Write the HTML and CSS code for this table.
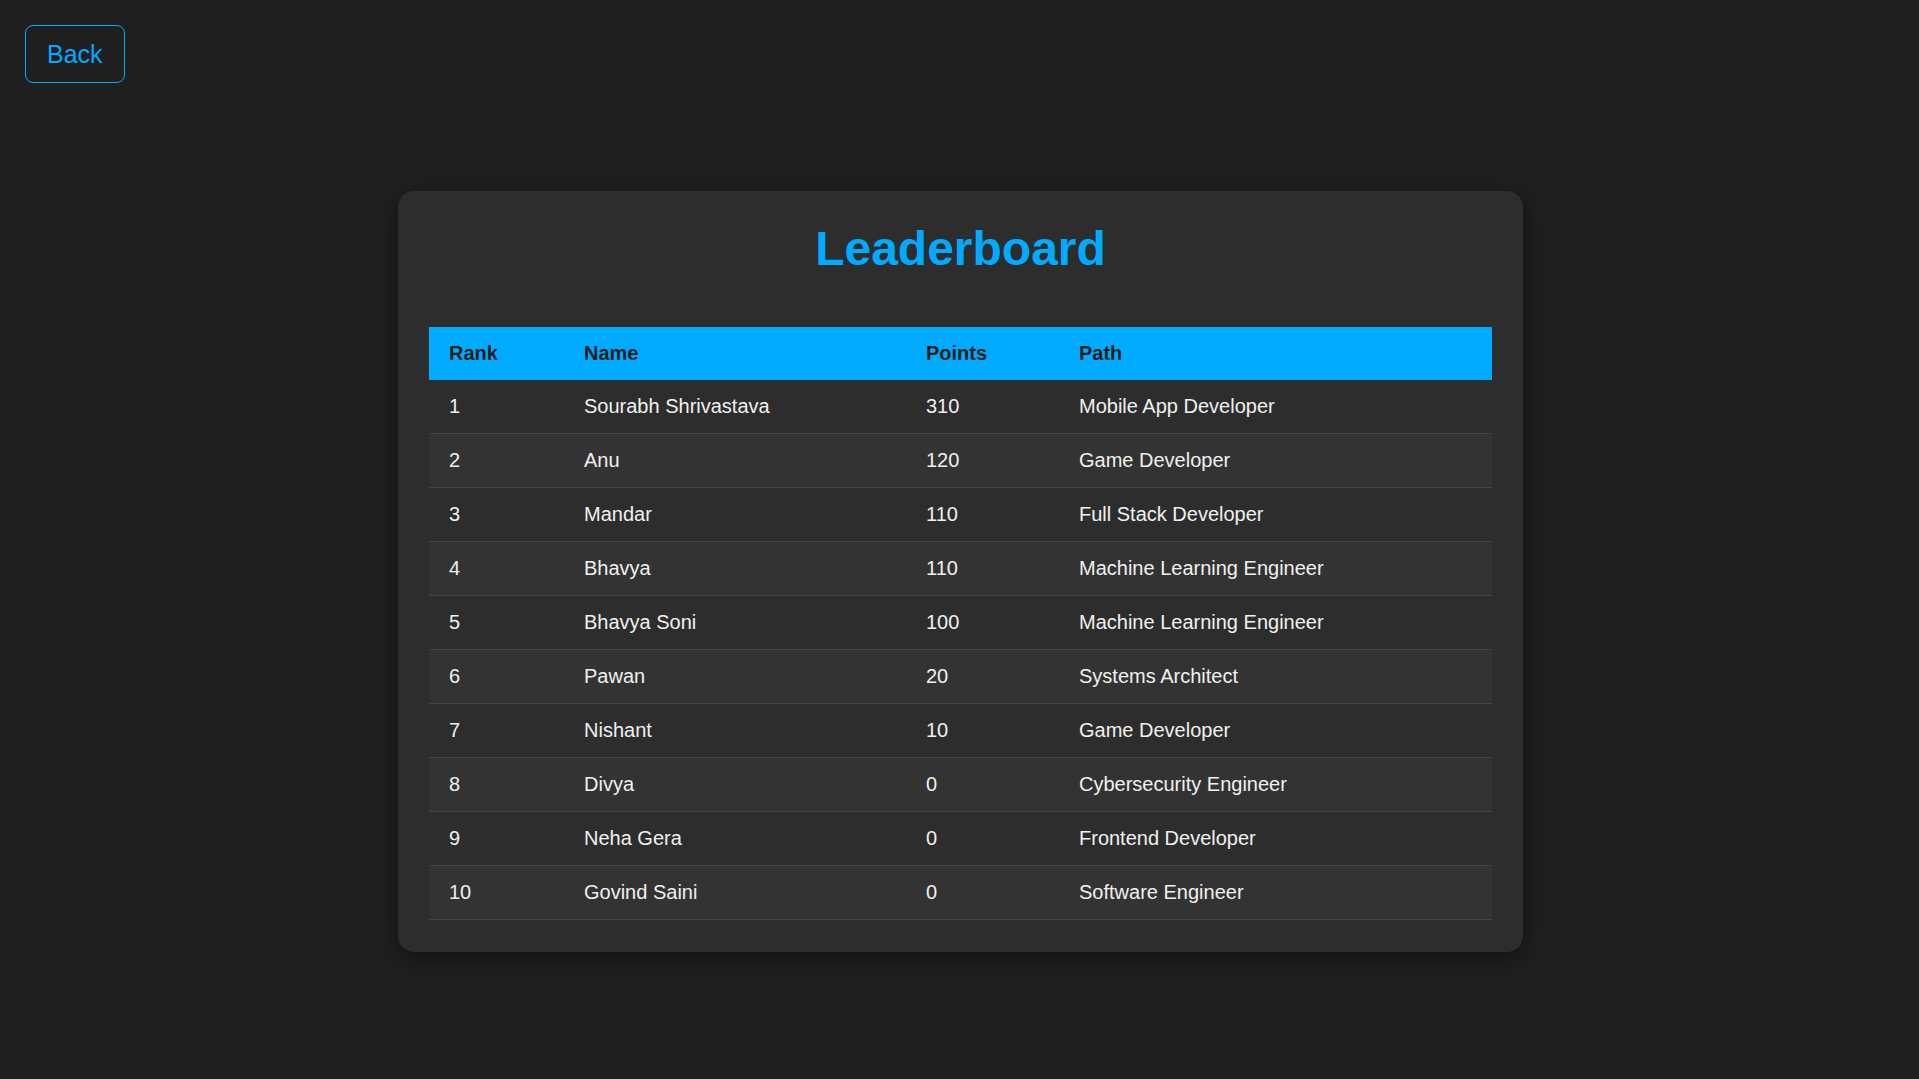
FILE: index.html
```html
<!DOCTYPE html>
<html lang="en">
<head>
<meta charset="utf-8">
<title>Leaderboard</title>
<link rel="stylesheet" href="styles.css">
</head>
<body>
<header class="topbar">
  <button class="back-btn" type="button">Back</button>
</header>
<main class="card">
  <h1 class="title">Leaderboard</h1>
  <table class="board">
    <thead>
      <tr>
        <th class="c-rank">Rank</th>
        <th class="c-name">Name</th>
        <th class="c-points">Points</th>
        <th class="c-path">Path</th>
      </tr>
    </thead>
    <tbody>
      <tr><td>1</td><td>Sourabh Shrivastava</td><td>310</td><td>Mobile App Developer</td></tr>
      <tr><td>2</td><td>Anu</td><td>120</td><td>Game Developer</td></tr>
      <tr><td>3</td><td>Mandar</td><td>110</td><td>Full Stack Developer</td></tr>
      <tr><td>4</td><td>Bhavya</td><td>110</td><td>Machine Learning Engineer</td></tr>
      <tr><td>5</td><td>Bhavya Soni</td><td>100</td><td>Machine Learning Engineer</td></tr>
      <tr><td>6</td><td>Pawan</td><td>20</td><td>Systems Architect</td></tr>
      <tr><td>7</td><td>Nishant</td><td>10</td><td>Game Developer</td></tr>
      <tr><td>8</td><td>Divya</td><td>0</td><td>Cybersecurity Engineer</td></tr>
      <tr><td>9</td><td>Neha Gera</td><td>0</td><td>Frontend Developer</td></tr>
      <tr><td>10</td><td>Govind Saini</td><td>0</td><td>Software Engineer</td></tr>
    </tbody>
  </table>
</main>
</body>
</html>
```

FILE: styles.css
```css
html, body {
  margin: 0;
  padding: 0;
}
body {
  background: #1f1f1f;
  font-family: "Liberation Sans", Arial, sans-serif;
  color: #f0f0f0;
  min-height: 1079px;
  padding-left: 2px;
  box-sizing: border-box;
}
.topbar {
  padding: 25px 0 0 23px;
  display: flex;
}
.back-btn {
  font-family: "Liberation Sans", Arial, sans-serif;
  font-size: 25px;
  line-height: 28px;
  color: #00aaff;
  background: transparent;
  border: 1px solid #00aaff;
  border-radius: 8px;
  padding: 14px 21px;
  cursor: pointer;
}
.card {
  width: 1125px;
  box-sizing: border-box;
  margin: 108px auto 0;
  background: #2d2d2d;
  border-radius: 16px;
  padding: 30px 31px 32px;
  box-shadow: 0 6px 24px rgba(0, 0, 0, 0.45);
}
.title {
  margin: 0 0 51px;
  text-align: center;
  font-size: 48px;
  font-weight: bold;
  color: #00aaff;
  line-height: 55px;
}
.board {
  width: 100%;
  border-collapse: collapse;
  font-size: 20px;
  line-height: 23px;
}
.board th {
  background: #00aaff;
  color: #1e1e1e;
  font-weight: bold;
  text-align: left;
  padding: 15px 20px;
}
.board td {
  padding: 15px 20px;
  border-bottom: 1px solid #444444;
  color: #f0f0f0;
}
.board tbody tr:nth-child(even) td {
  background: #333333;
}
.c-rank { width: 95px; }
.c-name { width: 302px; }
.c-points { width: 113px; }
.c-path { width: auto; }
```
